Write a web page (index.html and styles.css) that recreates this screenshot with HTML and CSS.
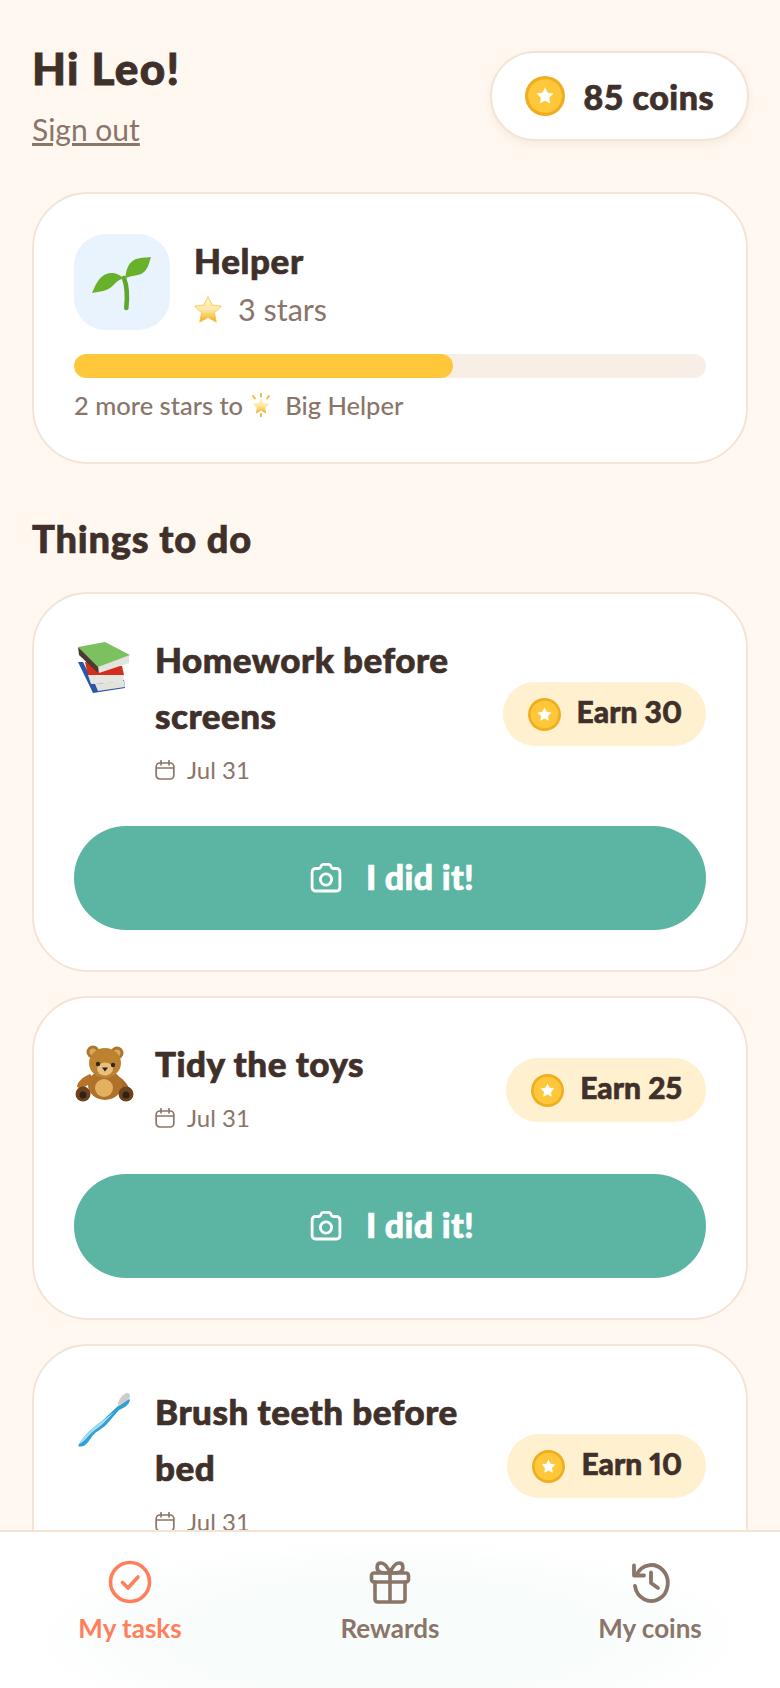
FILE: index.html
```html
<!DOCTYPE html>
<html>
<head>
	<meta charset="utf-8">
	<title>My tasks</title>
	<link rel="stylesheet" href="styles.css">
</head>
<body>
	<svg class="sprites" width="0" height="0">
		<symbol id="coin" viewBox="0 0 40 40">
			<circle cx="20" cy="20" r="20" fill="#f0ad1e"/>
			<circle cx="20" cy="20" r="16.800" fill="#ffc83a"/>
			<path d="M20 11.500l2.600 5.300 5.900.8-4.300 4.100 1 5.800-5.200-2.800-5.200 2.800 1-5.800-4.300-4.100 5.900-.8z" fill="#fff"/>
		</symbol>
		<symbol id="calendar" viewBox="0 0 20 20">
			<rect x="1.200" y="3" width="17.600" height="16" rx="3.500" fill="none" stroke="currentColor" stroke-width="1.700"/>
			<path d="M1.500 8h17M6 .8v4M14 .8v4" fill="none" stroke="currentColor" stroke-width="1.700" stroke-linecap="round"/>
		</symbol>
		<symbol id="camera" viewBox="0 0 32 32">
			<path d="M5.500 6.500h3.200c1 0 1.700-.6 2-1.500l.4-1c.3-1 1.100-1.700 2.200-1.700h5.400c1.100 0 1.900.7 2.200 1.700l.4 1c.3.900 1 1.500 2 1.500h3.200c2 0 3.400 1.500 3.400 3.400v15.700c0 2-1.400 3.400-3.400 3.400h-21c-2 0-3.400-1.400-3.400-3.400v-15.700c0-1.900 1.400-3.400 3.400-3.400z" fill="none" stroke="currentColor" stroke-width="2.800" stroke-linejoin="round"/>
			<circle cx="16" cy="17.500" r="5.600" fill="none" stroke="currentColor" stroke-width="2.800"/>
		</symbol>
	</svg>

	<div class="app">
		<main class="content">
			<header class="top">
				<div class="hello">
					<h1>Hi Leo!</h1>
					<a class="signout" href="#">Sign out</a>
				</div>
				<div class="coins">
					<svg class="coin-big"><use href="#coin"/></svg>
					<span>85 coins</span>
				</div>
			</header>

			<section class="card level">
				<div class="level-row">
					<div class="level-icon">
						<svg width="96" height="96" viewBox="0 0 96 96">
							<path d="M50 44c3 8 3.500 19 2.300 30" fill="none" stroke="#5fa62b" stroke-width="4.600" stroke-linecap="round"/>
							<path d="M18 59c3-6 6-17 16-19.500 7-1.700 12 1.500 16 5-5 .5-8 4-12 8-5 4.500-12 5-20 6.500z" fill="#69b02b"/>
							<path d="M51 45c1-7 2-15 9-19 6-3 11-2 17-3-2 6-3 13-9 16.500-6 3-12 1.500-17 5.500z" fill="#69b02b"/>
						</svg>
					</div>
					<div>
						<div class="level-name">Helper</div>
						<div class="level-stars">
							<svg width="28" height="27" viewBox="0 0 28 27">
								<defs>
									<linearGradient id="stargold" x1="0" y1="0" x2="0" y2="1">
										<stop offset="0" stop-color="#fff3cf"/>
										<stop offset=".5" stop-color="#ffe9a8"/>
										<stop offset="1" stop-color="#f4a81c"/>
									</linearGradient>
								</defs>
								<path d="M14 .5l4 8.500 9.500 1.200-7 6.500 1.800 9.500L14 21.500l-8.300 4.700 1.800-9.500-7-6.500L10 9z" fill="url(#stargold)" stroke="#f7c24a" stroke-width=".8" stroke-linejoin="round"/>
							</svg>
							<span>3 stars</span>
						</div>
					</div>
				</div>
				<div class="bar"><div class="bar-fill" style="width:60%"></div></div>
				<div class="level-next">
					<span>2 more stars to</span>
					<svg width="24" height="24" viewBox="0 0 22 24">
						<path d="M11 5l2.500 5 6 .8-4.300 4 1 5.700-5.200-2.800-5.200 2.800 1-5.700-4.300-4 6-.8z" fill="url(#stargold)"/>
						<path d="M11 .5v3M3 3l2 2.500M19 3l-2 2.500M11 21v2.500" stroke="#f5b52c" stroke-width="1.800" stroke-linecap="round"/>
					</svg>
					<span class="next-name">Big Helper</span>
				</div>
			</section>

			<h2 class="section-title">Things to do</h2>

			<section class="card task">
				<div class="task-row">
					<svg class="task-emoji" viewBox="0 0 60 60">
						<path d="M4 22l15 31 32-5-1-8-30 4L9 22z" fill="#2a56a6"/>
						<path d="M21 44l29-3 1 6-27 4z" fill="#e3e3dc"/>
						<path d="M11 22l37 4 2 9-36 0z" fill="#d12e1c"/>
						<path d="M14 35h36l-1 7-32 2z" fill="#e6e6e0"/>
						<path d="M4 7l1 8 19 18 2-8z" fill="#4a3a30"/>
						<path d="M24 26l31-11v8L25 33z" fill="#e4e4de"/>
						<path d="M4 7l27-5 25 13-32 12z" fill="#7cc160"/>
					</svg>
					<div class="task-text">
						<div class="task-title">Homework before screens</div>
						<div class="task-date">
							<svg class="cal"><use href="#calendar"/></svg>
							<span>Jul 31</span>
						</div>
					</div>
					<div class="earn">
						<svg class="coin-small"><use href="#coin"/></svg>
						<span>Earn 30</span>
					</div>
				</div>
				<button class="done">
					<svg class="cam"><use href="#camera"/></svg>
					<span>I did it!</span>
				</button>
			</section>

			<section class="card task">
				<div class="task-row">
					<svg class="task-emoji" viewBox="0 0 60 60">
						<circle cx="19" cy="8" r="6.500" fill="#b0752a"/>
						<circle cx="19" cy="8" r="3.500" fill="#d9a860"/>
						<circle cx="43" cy="9" r="6.500" fill="#b0752a"/>
						<circle cx="43" cy="9" r="3.500" fill="#d9a860"/>
						<path d="M16 30C9 33 3 38 3 43l5 2c4-3 9-6 13-9z" fill="#b5742a"/>
						<path d="M42 31c6 3 11 8 13 13l-6 1c-4-4-8-6-10-9z" fill="#a96b24"/>
						<ellipse cx="31" cy="41" rx="17" ry="15" fill="#b0722a"/>
						<ellipse cx="30" cy="44" rx="9" ry="9" fill="#e3b060"/>
						<ellipse cx="31" cy="19" rx="16" ry="15" fill="#bd8230"/>
						<ellipse cx="31" cy="25" rx="8" ry="6.500" fill="#e8bf7c"/>
						<circle cx="24" cy="20" r="2.200" fill="#33261c"/>
						<circle cx="39" cy="21" r="2.200" fill="#33261c"/>
						<path d="M28 23.500h6l-3 4z" fill="#2a1f18"/>
						<circle cx="9" cy="50" r="7.500" fill="#6e431b"/>
						<circle cx="9" cy="51" r="3.500" fill="#2f2118"/>
						<circle cx="52" cy="50" r="7.500" fill="#6e431b"/>
						<circle cx="52" cy="51" r="3.500" fill="#2f2118"/>
					</svg>
					<div class="task-text">
						<div class="task-title">Tidy the toys</div>
						<div class="task-date">
							<svg class="cal"><use href="#calendar"/></svg>
							<span>Jul 31</span>
						</div>
					</div>
					<div class="earn">
						<svg class="coin-small"><use href="#coin"/></svg>
						<span>Earn 25</span>
					</div>
				</div>
				<button class="done">
					<svg class="cam"><use href="#camera"/></svg>
					<span>I did it!</span>
				</button>
			</section>

			<section class="card task">
				<div class="task-row">
					<svg class="task-emoji" viewBox="0 0 60 60">
						<path d="M55 7L44 14 28 29C20 35 10 42 4 54c6 2 9-2 13-8 3-6 10-8 15-13l13-15c5-2 10-5 11-10z" fill="#2f9fd6"/>
						<path d="M40 20L27 30C19 36 10 43 5 52c6-2 10-10 16-14 6-4 11-9 19-18z" fill="#a4def0"/>
						<path d="M44 12c0-4 5-10 9-11 3 0 4 3 2 6L45 14z" fill="#cfcdca"/>
					</svg>
					<div class="task-text">
						<div class="task-title">Brush teeth before bed</div>
						<div class="task-date">
							<svg class="cal"><use href="#calendar"/></svg>
							<span>Jul 31</span>
						</div>
					</div>
					<div class="earn">
						<svg class="coin-small"><use href="#coin"/></svg>
						<span>Earn 10</span>
					</div>
				</div>
			</section>
		</main>

		<nav class="tabs">
			<a class="tab active" href="#">
				<svg width="44" height="44" viewBox="0 0 44 44" fill="none" stroke="currentColor" stroke-width="3.600" stroke-linecap="round" stroke-linejoin="round">
					<circle cx="22" cy="22" r="19.500"/>
					<path d="M14.500 22.500l5.500 5.500 10-11"/>
				</svg>
				<span>My tasks</span>
			</a>
			<a class="tab" href="#">
				<svg width="44" height="44" viewBox="0 0 44 44" fill="none" stroke="currentColor" stroke-width="3.600" stroke-linecap="round" stroke-linejoin="round">
					<rect x="3.500" y="13" width="37" height="9" rx="2.500"/>
					<path d="M7 22v17c0 2 1 3 3 3h24c2 0 3-1 3-3V22M22 13v29"/>
					<path d="M22 13c-2-5-5-10-9-10-5 0-5 7-1 9 2 1 6 1 10 1zM22 13c2-5 5-10 9-10 5 0 5 7 1 9-2 1-6 1-10 1z"/>
				</svg>
				<span>Rewards</span>
			</a>
			<a class="tab" href="#">
				<svg width="44" height="44" viewBox="1 0 42 44" fill="none" stroke="currentColor" stroke-width="3.800" stroke-linecap="round" stroke-linejoin="round">
					<path d="M8.500 15A16.500 18 0 1 1 7 26"/>
					<path d="M6 5.500V15.500h10"/>
					<path d="M23 12.500V23l7 5"/>
				</svg>
				<span>My coins</span>
			</a>
		</nav>
	</div>
</body>
</html>
```

FILE: styles.css
```css
html, body {
	margin: 0;
	height: 100%;
	background-color: #fff8f1;
	font-family: 'Lato', 'Noto Sans', sans-serif;
	color: #40302a;
}
.sprites {
	position: absolute;
}
.app {
	display: flex;
	flex-direction: column;
	height: 1688px;
	overflow: hidden;
}
.content {
	flex: 1;
	min-height: 0;
	overflow: hidden;
	padding: 32px 32px 0;
}

/* header */
.top {
	display: flex;
	justify-content: space-between;
	align-items: flex-start;
	height: 160px;
}
.hello h1 {
	margin: 9px 0 0;
	font-size: 44px;
	line-height: 54px;
	font-weight: 900;
	letter-spacing: 1.300px;
	-webkit-text-stroke: .9px #40302a;
}
.signout {
	display: block;
	margin-top: 15px;
	font-size: 30px;
	line-height: 38px;
	color: #8a7569;
}
.coins {
	display: flex;
	align-items: center;
	gap: 19px;
	margin-top: 19px;
	margin-right: -1px;
	height: 86px;
	padding: 0 33px 0 33px;
	background-color: #fff;
	border: 2px solid #f3e4d5;
	border-radius: 45px;
	box-shadow: 0 4px 8px #f6eadd;
	font-size: 34px;
	font-weight: 900;
	letter-spacing: .5px;
	-webkit-text-stroke: .7px #40302a;
}
.coin-big {
	width: 40px;
	height: 40px;
}

/* cards */
.card {
	box-sizing: border-box;
	background-color: #fff;
	border: 2px solid #f3e4d5;
	border-radius: 56px;
	padding: 40px;
}
.level {
	height: 272px;
}
.level-row {
	display: flex;
	gap: 24px;
}
.level-icon {
	width: 96px;
	height: 96px;
	border-radius: 32px;
	background-color: #e8f3fe;
}
.level-name {
	margin-top: 6px;
	font-size: 35px;
	line-height: 40px;
	font-weight: 900;
	letter-spacing: .6px;
	-webkit-text-stroke: .7px #40302a;
}
.level-stars {
	display: flex;
	align-items: center;
	gap: 16px;
	margin-top: 11px;
	font-size: 30.500px;
	line-height: 36px;
	color: #8a7569;
}
.bar {
	height: 24px;
	margin-top: 24px;
	border-radius: 12px;
	background-color: #f7efe5;
	overflow: hidden;
}
.bar-fill {
	height: 100%;
	border-radius: 12px;
	background-color: #ffc83a;
}
.level-next {
	display: flex;
	align-items: center;
	gap: 6px;
	margin-top: 10px;
	font-size: 25.500px;
	font-weight: 500;
	line-height: 34px;
	color: #8a7569;
}
.next-name {
	margin-left: 6px;
}
.section-title {
	margin: 46px 0 26px;
	font-size: 38px;
	line-height: 56px;
	font-weight: 900;
	letter-spacing: .8px;
	-webkit-text-stroke: .7px #40302a;
}

/* tasks */
.task {
	margin-bottom: 24px;
}
.task-row {
	display: flex;
	align-items: center;
}
.task-emoji {
	flex: none;
	align-self: flex-start;
	width: 60px;
	height: 60px;
	margin-top: 6px;
	margin-right: 21px;
}
.task-text {
	flex: 1;
	min-width: 0;
}
.task-title {
	margin-top: -3px;
	padding-right: 20px;
	font-size: 35px;
	line-height: 56px;
	font-weight: 900;
	letter-spacing: .5px;
	-webkit-text-stroke: .7px #40302a;
}
.task-date {
	display: flex;
	align-items: center;
	gap: 12px;
	margin-top: 9px;
	margin-bottom: 6px;
	font-size: 24px;
	line-height: 36px;
	color: #8a7569;
}
.cal {
	width: 20px;
	height: 20px;
}
.earn {
	flex: none;
	display: flex;
	align-items: center;
	gap: 16px;
	height: 64px;
	padding: 0 24px 0 25px;
	border-radius: 32px;
	background-color: #fff0d0;
	font-size: 30px;
	font-weight: 900;
	font-variant-numeric: proportional-nums;
	-webkit-text-stroke: .6px #40302a;
}
.earn span {
	margin-bottom: 6px;
}
.coin-small {
	width: 33px;
	height: 33px;
}
.done {
	display: flex;
	align-items: center;
	justify-content: center;
	gap: 24px;
	width: 100%;
	height: 104px;
	margin-top: 32px;
	padding: 0 0 0 4px;
	border: 0;
	border-radius: 52px;
	background-color: #5bb5a2;
	color: #fff;
	font-family: inherit;
	font-size: 34px;
	font-weight: 900;
	letter-spacing: .3px;
	-webkit-text-stroke: .7px #fff;
}
.done span {
	margin-bottom: 4px;
}
.cam {
	width: 32px;
	height: 32px;
}

/* bottom nav */
.tabs {
	flex: none;
	display: grid;
	grid-template-columns: 1fr 1fr 1fr;
	height: 128px;
	padding-top: 28px;
	background: radial-gradient(ellipse 370px 100px at 50% 105px, #f8fcfa 55%, #fff);
	border-top: 2px solid #f3e4d5;
}
.tab {
	display: flex;
	flex-direction: column;
	align-items: center;
	gap: 6px;
	font-size: 26px;
	font-weight: 700;
	line-height: 36px;
	text-decoration: none;
	color: #8a7569;
}
.tab.active {
	color: #ff7f5c;
}
```
